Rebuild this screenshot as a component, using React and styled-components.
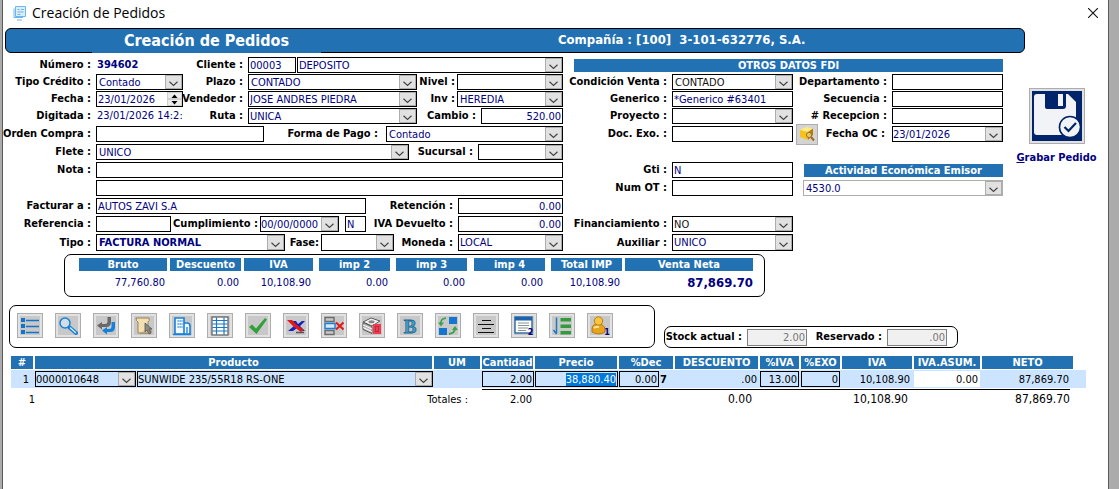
import React, { useEffect, useId, useRef } from "react";
import styled, { createGlobalStyle, css } from "styled-components";

const BLUE = "#2271b3";
const NAVY = "#000080";
const SELECTED = "#cce4ff";

const GlobalStyle = createGlobalStyle`
  * { box-sizing: border-box; }
  body {
    margin: 0;
    background: #ababab;
    font-family: "DejaVu Sans Condensed", "DejaVu Sans", "Noto Sans", sans-serif;
    font-size: 11px;
    color: #000;
  }
  input, select, button { font: inherit; margin: 0; }
`;

/* Grows and shrinks in proportion to its nominal width. */
const sized = css`
  flex: ${(p) => `${p.$w} ${p.$w} ${p.$w}px`};
  min-width: 0;
`;

const Window = styled.main`
  min-height: 100vh;
  margin: 0 10px 0 2px;
  padding-bottom: 24px;
  background: #fff;
  border: solid #5a5a5a;
  border-width: 0 1px;
`;

const TitleBar = styled.header`
  display: flex;
  align-items: center;
  height: 26px;
  padding: 0 9px 0 10px;
  font: 14px/26px "Open Sans", "Noto Sans", sans-serif;
`;

const WindowTitle = styled.span`
  flex: 1;
  margin-left: 6px;
`;

const CloseButton = styled.button`
  display: grid;
  place-items: center;
  width: 12px;
  height: 12px;
  padding: 0;
  border: 0;
  background: none;
`;

const Banner = styled.div`
  display: flex;
  height: 25px;
  margin: 2px 83px 4px 2px;
  background: ${BLUE};
  border: 1px solid #000;
  border-radius: 6px;
  color: #fff;
  font-weight: bold;
`;

const Heading = styled.h1`
  flex: 0 0 229px;
  margin: 0 0 -1px 86px;
  background: ${BLUE};
  font-size: 16px;
  line-height: 23px;
  text-align: center;
`;

const Company = styled.p`
  flex: 1;
  margin: 0 0 0 237px;
  font-size: 13px;
  line-height: 21px;
  white-space: pre;
`;

const Form = styled.form`
  display: flex;
`;

const Panel = styled.div`
  ${sized}
`;

const Rows = styled.div`
  display: flex;
  flex-direction: column;
  gap: ${(p) => p.$gap}px;
  margin-bottom: 2px;
`;

const Row = styled.div`
  display: flex;
  align-items: center;
  height: ${(p) => p.$h || 16}px;
`;

const Spacer = styled.span`
  ${sized}
`;

const Label = styled.label`
  ${sized}
  display: flex;
  justify-content: flex-end;
  padding-right: ${(p) => p.$pad ?? 5}px;
  font-weight: bold;
  line-height: 14px;
  white-space: nowrap;
`;

const StaticText = styled.output`
  ${sized}
  padding-left: 1px;
  color: ${NAVY};
  font-weight: ${(p) => (p.$bold ? "bold" : "normal")};
  line-height: 14px;
  white-space: nowrap;
`;

const Frame = styled.div`
  ${sized}
  display: grid;
  grid-template: minmax(0, 1fr) / minmax(0, 1fr);
  height: 100%;
  background: ${(p) => p.$bg || "#fff"};
  border: 1px solid ${(p) => p.$border || "#000"};
`;

const Input = styled.input`
  grid-area: 1 / 1;
  width: 100%;
  min-width: 0;
  height: 100%;
  padding: 0 1px;
  border: 0;
  outline: 0;
  background: transparent;
  color: ${(p) => p.$color || NAVY};
  text-align: ${(p) => (p.$right ? "right" : "left")};
  &::selection { background: #0078d7; color: #fff; }
`;

const Select = styled.select`
  grid-area: 1 / 1;
  width: 100%;
  min-width: 0;
  height: 100%;
  padding: 0 18px 0 ${(p) => p.$indent ?? 2}px;
  border: 0;
  outline: 0;
  appearance: none;
  background: transparent;
  color: ${(p) => p.$color || NAVY};
  font-weight: ${(p) => (p.$bold ? "bold" : "normal")};
`;

const Arrow = styled.span`
  grid-area: 1 / 1;
  justify-self: end;
  display: grid;
  place-items: end center;
  width: 17px;
  padding-bottom: 1px;
  background: #e1e1e1;
  border: 1px solid #adadad;
  pointer-events: none;
`;

const Spinner = styled.span`
  grid-area: 1 / 1;
  justify-self: end;
  display: grid;
  grid-template-rows: 1fr 1fr;
  width: 15px;
`;

const SpinButton = styled.button`
  display: grid;
  place-items: center;
  min-height: 0;
  padding: 0;
  border: 1px solid #d0d0d0;
  background: #ececec;
`;

const SectionTitle = styled.h2`
  flex: 1;
  height: 13px;
  margin: 0 0 0 ${(p) => p.$left}px;
  background: ${BLUE};
  color: #fff;
  font-size: 11px;
  line-height: 13px;
  text-align: center;
`;

const LookupButton = styled.button`
  flex: 0 0 22px;
  height: 21px;
  margin-left: 3px;
  padding: 0;
  display: grid;
  place-items: center;
  background: #d4d4d4;
  border: 1px solid #adadad;
`;

const SaveColumn = styled.div`
  ${sized}
  display: flex;
  justify-content: center;
  align-items: flex-start;
  padding: 31px 0 0 2px;
`;

const SaveButton = styled.button`
  display: grid;
  justify-items: center;
  gap: 7px;
  padding: 0;
  border: 0;
  background: none;
  color: ${NAVY};
  font-weight: bold;
  white-space: nowrap;
`;

const SaveIcon = styled.span`
  display: grid;
  place-items: center;
  width: 56px;
  height: 56px;
  background: #e1e1e1;
  border: 1px solid #adadad;
`;

const Box = styled.div`
  border: 1px solid #000;
  border-radius: 7px;
`;

const TotalsBox = styled(Box)`
  height: 43px;
  margin: 1px 343px 8px 61px;
  padding: 3px 11px 0 14px;
`;

const DataTable = styled.table`
  display: block;
  thead, tbody, tfoot { display: block; }
`;

const GridRow = styled.tr`
  display: grid;
  grid-template-columns: ${(p) => p.$cols.map((c) => `minmax(0, ${c}fr)`).join(" ")};
`;

const HeadCell = styled.th`
  height: 13px;
  margin-right: ${(p) => p.$gap}px;
  padding: 0;
  background: ${BLUE};
  color: #fff;
  font-size: 11px;
  line-height: 13px;
  text-align: center;
  white-space: nowrap;
`;

const TotalCell = styled.td`
  padding: 0 ${(p) => p.$pad}px 0 0;
  color: ${NAVY};
  font-size: ${(p) => (p.$strong ? 13 : 11)}px;
  font-weight: ${(p) => (p.$strong ? "bold" : "normal")};
  line-height: 24px;
  text-align: right;
`;

const ToolRow = styled.div`
  display: flex;
  align-items: flex-end;
  gap: 9px;
  padding: 0 150px 0 6px;
`;

const Toolbar = styled(Box)`
  ${sized}
  display: flex;
  align-items: center;
  gap: 12px;
  height: 43px;
  padding: 0 7px 2px;
`;

const ToolButton = styled.button`
  flex: 0 0 26px;
  display: grid;
  place-items: center;
  height: 25px;
  padding: 0;
  background: linear-gradient(#c8c8c8, #c8c8c8) center / 20px 19px no-repeat #e1e1e1;
  border: 1px solid #adadad;
`;

const StockBox = styled(Box)`
  ${sized}
  display: flex;
  align-items: center;
  height: 22px;
  padding: 0 10px 0 4px;
`;

const StockFrame = styled(Frame)`
  height: 17px;
`;

const ItemSection = styled.section`
  padding: 8px 22px 0 8px;
`;

const ItemRow = styled(GridRow)`
  height: 18px;
  margin-top: 1px;
  background: ${SELECTED};
`;

const ItemCell = styled.td`
  display: flex;
  justify-content: flex-end;
  align-items: center;
  gap: 1px;
  height: 18px;
  padding: 1px ${(p) => p.$pad ?? 1}px 1px 0;
`;

const FootRow = styled(GridRow)`
  margin-top: 1px;
`;

const FootCell = styled.td`
  grid-column: span ${(p) => p.$span || 1};
  height: 21px;
  margin-right: ${(p) => p.$inset || 0}px;
  padding: 0 ${(p) => p.$pad || 0}px 0 0;
  border-top: 1px solid ${(p) => (p.$line ? "#000" : "transparent")};
  font-size: ${(p) => (p.$large ? 12 : 11)}px;
  line-height: 19px;
  text-align: right;
  white-space: nowrap;
`;

function Chevron() {
  return (
    <svg width="9" height="6" viewBox="0 0 9 6" fill="none" stroke="#444" strokeWidth="1.2">
      <path d="M0.5 0.800 4.500 4.500 8.500 0.800" />
    </svg>
  );
}

function TextField({ label, labelW, pad, w, value = "", right, name }) {
  const id = useId();
  return (
    <>
      {label && <Label htmlFor={id} $w={labelW} $pad={pad}>{label}</Label>}
      <Frame $w={w}>
        <Input id={id} defaultValue={value} $right={right} aria-label={label ? undefined : name} />
      </Frame>
    </>
  );
}

function SelectField({ label, labelW, pad, w, value = "", color, bold, border, bg, indent, name }) {
  const id = useId();
  return (
    <>
      {label && <Label htmlFor={id} $w={labelW} $pad={pad}>{label}</Label>}
      <Frame $w={w} $border={border} $bg={bg}>
        <Select id={id} $color={color} $bold={bold} $indent={indent} aria-label={label ? undefined : name}>
          <option>{value}</option>
        </Select>
        <Arrow><Chevron /></Arrow>
      </Frame>
    </>
  );
}

function DateField({ label, labelW, w, value }) {
  const id = useId();
  return (
    <>
      <Label htmlFor={id} $w={labelW}>{label}</Label>
      <Frame $w={w}>
        <Input id={id} defaultValue={value} />
        <Spinner>
          <SpinButton type="button" aria-label="Subir">
            <svg width="7" height="4" viewBox="0 0 7 4"><path d="M0.5 4 3.5 0.5 6.5 4z" /></svg>
          </SpinButton>
          <SpinButton type="button" aria-label="Bajar">
            <svg width="7" height="4" viewBox="0 0 7 4"><path d="M0.5 0 3.5 3.5 6.5 0z" /></svg>
          </SpinButton>
        </Spinner>
      </Frame>
    </>
  );
}

function LeftPanel() {
  return (
    <Panel $w={560}>
      <Rows $gap={1}>
        <Row>
          <Label as="span" $w={93}>Número :</Label>
          <StaticText $w={86} $bold>394602</StaticText>
          <TextField label="Cliente :" labelW={66} w={48} value="00003" />
          <Spacer $w={1} />
          <SelectField name="Nombre del cliente" w={266} value="DEPOSITO" indent={1} />
        </Row>
        <Row>
          <SelectField label="Tipo Crédito :" labelW={93} w={87} value="Contado" />
          <SelectField label="Plazo :" labelW={65} w={169} value="CONTADO" />
          <SelectField label="Nivel :" labelW={40} pad={2} w={106} />
        </Row>
        <Row>
          <DateField label="Fecha :" labelW={93} w={87} value="23/01/2026" />
          <SelectField label="Vendedor :" labelW={65} w={169} value="JOSE ANDRES PIEDRA" indent={1} />
          <SelectField label="Inv :" labelW={40} pad={2} w={106} value="HEREDIA" />
        </Row>
        <Row>
          <Label as="span" $w={93}>Digitada :</Label>
          <StaticText $w={87}>23/01/2026 14:2:</StaticText>
          <SelectField label="Ruta :" labelW={65} w={169} value="UNICA" indent={1} />
          <TextField label="Cambio :" labelW={64} w={82} value="520.00" right />
        </Row>
      </Rows>
      <Rows $gap={2}>
        <Row>
          <TextField label="Orden Compra :" labelW={93} w={168} />
          <SelectField label="Forma de Pago :" labelW={122} pad={8} w={177} value="Contado" />
        </Row>
        <Row>
          <SelectField label="Flete :" labelW={93} w={313} value="UNICO" />
          <SelectField label="Sucursal :" labelW={69} w={85} />
        </Row>
        <Row><TextField label="Nota :" labelW={93} w={467} /></Row>
        <Row>
          <Spacer $w={93} />
          <TextField name="Nota, segunda línea" w={467} />
        </Row>
        <Row>
          <TextField label="Facturar a :" labelW={93} w={270} value="AUTOS ZAVI S.A" />
          <TextField label="Retención :" labelW={92} w={105} value="0.00" right />
        </Row>
        <Row>
          <TextField label="Referencia :" labelW={93} w={75} />
          <SelectField label="Cumplimiento :" labelW={89} pad={2} w={79} value="00/00/0000" indent={0} />
          <Spacer $w={6} />
          <TextField name="Cumplido" w={21} value="N" />
          <TextField label="IVA Devuelto :" labelW={92} w={105} value="0.00" right />
        </Row>
        <Row $h={17}>
          <SelectField label="Tipo :" labelW={93} w={189} value="FACTURA NORMAL" bold />
          <SelectField label="Fase:" labelW={36} pad={2} w={73} />
          <SelectField label="Moneda :" labelW={64} w={105} value="LOCAL" indent={1} />
        </Row>
      </Rows>
    </Panel>
  );
}

function RightPanel() {
  return (
    <Panel $w={440}>
      <Rows $gap={1}>
        <Row><SectionTitle $left={11}>OTROS DATOS FDI</SectionTitle></Row>
        <Row>
          <SelectField label="Condición Venta :" labelW={109} w={121} value="CONTADO" color="#111" />
          <TextField label="Departamento :" labelW={99} w={111} />
        </Row>
        <Row>
          <TextField label="Generico :" labelW={109} w={121} value="*Generico #63401" />
          <TextField label="Secuencia :" labelW={99} w={111} />
        </Row>
        <Row>
          <SelectField label="Proyecto :" labelW={109} w={121} />
          <TextField label="# Recepcion :" labelW={99} w={111} />
        </Row>
      </Rows>
      <Rows $gap={2}>
        <Row>
          <TextField label="Doc. Exo. :" labelW={109} w={121} />
          <LookupButton type="button" aria-label="Buscar documento">
            <svg width="18" height="18" viewBox="0 0 18 18">
              <path d="M2 5 8 2l7 1.500-5 3.500z" fill="#ffec80" />
              <path d="M2 5l8 2v8l-8-3z" fill="#f7c21e" />
              <path d="M10 7l5-3.500V10l-5 5z" fill="#b9790e" />
              <circle cx="11" cy="10" r="2.600" fill="#e9c765" stroke="#9b7428" />
              <path d="M13 12l3 3.500" stroke="#a8641a" strokeWidth="2" />
            </svg>
          </LookupButton>
          <SelectField label="Fecha OC :" labelW={74} pad={7} w={111} value="23/01/2026" indent={0} />
        </Row>
        <Row />
        <Row>
          <TextField label="Gti :" labelW={109} w={121} value="N" />
          <Panel $w={210}>
            <Row $h={14}><SectionTitle $left={11}>Actividad Económica Emisor</SectionTitle></Row>
          </Panel>
        </Row>
        <Row>
          <TextField label="Num OT :" labelW={109} w={121} />
          <Spacer $w={10} />
          <SelectField name="Actividad Económica Emisor" w={200} value="4530.0" border="#adadad" />
        </Row>
        <Row />
        <Row>
          <SelectField label="Financiamiento :" labelW={109} w={121} value="NO" color="#111" indent={1} />
          <Spacer $w={210} />
        </Row>
        <Row $h={17}>
          <SelectField label="Auxiliar :" labelW={109} w={121} value="UNICO" indent={1} />
          <Spacer $w={210} />
        </Row>
      </Rows>
    </Panel>
  );
}

function DiskIcon() {
  return (
    <svg width="50" height="50" viewBox="0 0 50 50">
      <rect width="50" height="50" fill="#00246b" />
      <path d="M5 3h8v13q0 2 2 2h16q3 0 3-3V3h2l8 8v18a10 10 0 0 0-14 15H5q-3 0-3-3V6q0-3 3-3z" fill="#f1f3f6" />
      <rect x="26" y="3" width="5" height="12" fill="#f1f3f6" />
      <circle cx="38" cy="36" r="10.500" fill="#f1f3f6" stroke="#00246b" strokeWidth="1.500" />
      <path d="M32.500 36l4 4 7.500-8" fill="none" stroke="#00246b" strokeWidth="2.200" />
    </svg>
  );
}

const TOOLS = [
  ["Lista", <>
    <path d="M1 2h4v4H1zM1 8h4v4H1zM1 14h4v4H1z" fill="#1173c9" />
    <path d="M6 4.500h13M6 10.500h13M6 16.500h13" stroke="#1173c9" strokeWidth="1.300" />
  </>],
  ["Buscar", <>
    <path d="M11 11l7 6" stroke="#1a80d4" strokeWidth="4" strokeLinecap="round" />
    <path d="M12.500 12l5 4.500" stroke="#d4e4f2" strokeWidth="1.500" strokeLinecap="round" />
    <circle cx="7" cy="7" r="5" fill="#d2dde6" stroke="#1a80d4" strokeWidth="1.500" />
  </>],
  ["Devolver", <>
    <path d="M11.500 1h3.500v5q0 5-5 5H6v2.500L1 9.500 6 6v2h3q2.500 0 2.500-2z" fill="#686868" />
    <path d="M15.500 6H19v5q0 5-5 5h-3v2.500L6 14.500 11 11v2h2q2.500 0 2.500-2z" fill="#1681da" />
  </>],
  ["Documento", <>
    <path d="M2 2h13q1 3-1 4v11H4V6Q2 5 2 2z" fill="#f2dfb2" stroke="#9a835a" />
    <path d="M6 17h11v-3h-6" fill="#dfc591" stroke="#9a835a" />
    <path d="M11 7v9l2-2 2 4 2-1-2-4h3z" fill="#8b8b86" stroke="#555" strokeWidth=".8" />
  </>],
  ["Empresa", <>
    <path d="M3 18V2h9v16zM12 7h3q3 0 3 3v8h-6" fill="#f5f9fc" stroke="#1681da" strokeWidth="1.600" />
    <path d="M5.500 5h5M5.500 8h5M5.500 11h5" stroke="#1681da" strokeWidth="1.400" strokeDasharray="1.200 .8" />
    <path d="M1 18.500h18M15 11v6" stroke="#1681da" strokeWidth="1.300" />
  </>],
  ["Tabla", <>
    <rect x="2" y="1" width="16" height="18" fill="#fff" stroke="#666" strokeWidth="1.300" />
    <path d="M2.500 4.500h15M2.500 8h15M2.500 11.500h15M2.500 15h15M6.500 1.500v17M14 1.500v17" stroke="#1b78c4" strokeWidth="1.200" />
  </>],
  ["Aceptar", <path d="M1 11l3-2.500 4 4L17 2l2 1.500L8.500 18z" fill="#32a03a" />],
  ["Anular", <>
    <path d="M2 15 8 10 6 5h4l2 3 4-3h3l-5 5 5 5h-5l-3-3-4 3z" fill="#1220c0" />
    <path d="M1 4h5l5 5 7 5-3 2-7-5z" fill="#e31818" />
    <path d="M10 16.500h8" stroke="#555" strokeWidth="1.500" />
  </>],
  ["Eliminar línea", <>
    <path d="M1 1.500h9v4H1zM1 14.500h9v4H1z" fill="none" stroke="#6c6c6c" strokeWidth="1.400" />
    <path d="M1 7.500h10v5H1z" fill="#d8e8f5" stroke="#1681da" strokeWidth="1.400" />
    <path d="M12 6.500l7.500 7M19.500 6.500l-7.500 7" stroke="#e21b1b" strokeWidth="2" />
  </>],
  ["Efectivo", <>
    <path d="M1 6 9 2l9 3-8 5z" fill="#f2f2f2" stroke="#5c5c5c" />
    <ellipse cx="9.500" cy="5.800" rx="3" ry="1.500" fill="#888" />
    <path d="M1 6.500v7l9 4v-7z" fill="#b5b5b5" stroke="#5c5c5c" />
    <path d="M1 9l9 4M1 11.500l9 4" stroke="#fff" />
    <rect x="11" y="8" width="8" height="10" fill="#ee3d50" />
    <rect x="13.500" y="10.500" width="3" height="5" fill="none" stroke="#c22a3c" />
  </>],
  ["Negrita", <text x="10" y="16.500" textAnchor="middle" fontFamily="Liberation Serif, serif" fontSize="19" fontWeight="bold" fill="#4a9ac6" stroke="#216c98" strokeWidth=".8">B</text>],
  ["Intercambiar", <>
    <path d="M11 1h8v7h-8zM1 12h8v7H1z" fill="#1476d0" />
    <path d="M3 8Q2 3 8 2" fill="none" stroke="#38a34a" strokeWidth="1.600" />
    <path d="M0 6.500h6L3 10.500zM14 14l3-4 3 4z" fill="#38a34a" />
    <path d="M17 12q0 5-6 6" fill="none" stroke="#38a34a" strokeWidth="1.800" />
  </>],
  ["Centrar", <path d="M6 4.500h9M2 8.500h16M6 12.500h9M2 16.500h16" stroke="#111" strokeWidth="1.200" />],
  ["Ventana", <>
    <rect x="1" y="1" width="17" height="16" fill="#fffef0" stroke="#2b6aa6" strokeWidth="1.400" />
    <path d="M1 1h17v3.500H1z" fill="#1c62ae" />
    <path d="M4 7h11M4 9.500h11M4 12h10M4 14.500h8" stroke="#8295a8" />
    <text x="16.500" y="19" textAnchor="middle" fontFamily="DejaVu Sans, sans-serif" fontSize="8" fontWeight="bold" fill={NAVY}>2</text>
  </>],
  ["Ordenar", <>
    <path d="M8.500 2H19v3.500H8.500zM8.500 8.500H19V12H8.500zM8.500 15H19v3.500H8.500z" fill="#339b3d" />
    <path d="M4.500 1.500v16M1.500 14l3 4" fill="none" stroke="#1b78c4" strokeWidth="1.500" />
  </>],
  ["Usuario", <>
    <path d="M2 13q0-5 6-5t7 5v3q-6 4-13 0z" fill="#e8a31c" stroke="#a86a08" strokeWidth=".8" />
    <circle cx="8.500" cy="5" r="4.200" fill="#f8c53c" stroke="#a86a08" strokeWidth=".8" />
    <path d="M4 12q2-2 5-1" stroke="#ffe697" strokeWidth="2" fill="none" />
    <text x="17" y="19" textAnchor="middle" fontFamily="DejaVu Sans, sans-serif" fontSize="8" fontWeight="bold" fill={NAVY}>1</text>
  </>],
];

const TOTAL_COLS = [91, 74, 75, 77, 78, 77, 74, 128];
const TOTALS = [
  ["Bruto", "77,760.80", 3],
  ["Descuento", "0.00", 3],
  ["IVA", "10,108.90", 6],
  ["imp 2", "0.00", 6],
  ["imp 3", "0.00", 7],
  ["imp 4", "0.00", 6],
  ["Total IMP", "10,108.90", 3],
  ["Venta Neta", "87,869.70", 0],
];

function Totals() {
  return (
    <TotalsBox>
      <DataTable>
        <thead>
          <GridRow $cols={TOTAL_COLS}>
            {TOTALS.map(([name, , gap]) => <HeadCell key={name} scope="col" $gap={gap}>{name}</HeadCell>)}
          </GridRow>
        </thead>
        <tbody>
          <GridRow $cols={TOTAL_COLS}>
            {TOTALS.map(([name, value, gap], i) => (
              <TotalCell key={name} $strong={i === 7} $pad={i === 7 ? 0 : gap + 2}>{value}</TotalCell>
            ))}
          </GridRow>
        </tbody>
      </DataTable>
    </TotalsBox>
  );
}

const ITEM_COLS = [24, 399, 48, 53, 84, 56, 85, 41, 41, 72, 68, 104];
const ITEM_HEADS = ["#", "Producto", "UM", "Cantidad", "Precio", "%Dec", "DESCUENTO", "%IVA", "%EXO", "IVA", "IVA.ASUM.", "NETO"];

function ItemInput({ name, value, border = "#000", bg = SELECTED, inputRef }) {
  return (
    <Frame $w={1} $border={border} $bg={bg}>
      <Input ref={inputRef} aria-label={name} defaultValue={value} $right $color="#000" />
    </Frame>
  );
}

function Items() {
  const price = useRef(null);
  useEffect(() => {
    price.current.focus();
    price.current.select();
  }, []);
  return (
    <ItemSection>
      <DataTable>
        <thead>
          <GridRow $cols={ITEM_COLS}>
            {ITEM_HEADS.map((h) => <HeadCell key={h} scope="col" $gap={h === "NETO" ? 13 : 2}>{h}</HeadCell>)}
          </GridRow>
        </thead>
        <tbody>
          <ItemRow $cols={ITEM_COLS}>
            <ItemCell $pad={6}>1</ItemCell>
            <ItemCell>
              <SelectField name="Código" w={101} value="0000010648" color="#000" bg={SELECTED} indent={0} />
              <SelectField name="Producto" w={296} value="SUNWIDE 235/55R18 RS-ONE" color="#000" bg={SELECTED} indent={0} />
            </ItemCell>
            <ItemCell />
            <ItemCell><ItemInput name="Cantidad" value="2.00" /></ItemCell>
            <ItemCell><ItemInput name="Precio" value="38,880.40" inputRef={price} /></ItemCell>
            <ItemCell $pad={8}><ItemInput name="Descuento %" value="0.00" /><b>7</b></ItemCell>
            <ItemCell $pad={3}>.00</ItemCell>
            <ItemCell $pad={2}><ItemInput name="IVA %" value="13.00" /></ItemCell>
            <ItemCell $pad={2}><ItemInput name="Exoneración %" value="0" /></ItemCell>
            <ItemCell $pad={4}>10,108.90</ItemCell>
            <ItemCell $pad={2}><ItemInput name="IVA asumido" value="0.00" border="#fff" bg="#fff" /></ItemCell>
            <ItemCell $pad={17}>87,869.70</ItemCell>
          </ItemRow>
        </tbody>
        <tfoot>
          <FootRow $cols={ITEM_COLS}>
            <FootCell>1</FootCell>
            <FootCell $span={2} $pad={14}>Totales :</FootCell>
            <FootCell $line $pad={3}>2.00</FootCell>
            <FootCell $line />
            <FootCell $line />
            <FootCell $line $large $pad={8}>0.00</FootCell>
            <FootCell $line />
            <FootCell $line />
            <FootCell $line $large $pad={6}>10,108.90</FootCell>
            <FootCell $line />
            <FootCell $line $large $inset={16}>87,869.70</FootCell>
          </FootRow>
        </tfoot>
      </DataTable>
    </ItemSection>
  );
}

export default function App() {
  return (
    <>
      <GlobalStyle />
      <Window>
        <TitleBar>
          <svg width="13" height="15" viewBox="0 0 13 15" fill="none" stroke="#6fb4ea">
            <path d="M1 2.500v9h9" />
            <path d="M2.500.5h10v10h-10z" fill="#d9edfb" />
            <path d="M4.500 3.500h2M8 3.500h3M4.500 6h6M4.500 8.500h3M4 14h5" />
          </svg>
          <WindowTitle>Creación de Pedidos</WindowTitle>
          <CloseButton aria-label="Cerrar">
            <svg width="10" height="10" viewBox="0 0 10 10" stroke="#111" strokeWidth="1.100">
              <path d="M0 0l10 10M10 0L0 10" />
            </svg>
          </CloseButton>
        </TitleBar>
        <Banner>
          <Heading>Creación de Pedidos</Heading>
          <Company>Compañía : [100]  3-101-632776, S.A.</Company>
        </Banner>
        <Form>
          <LeftPanel />
          <RightPanel />
          <SaveColumn $w={105}>
            <SaveButton type="button">
              <SaveIcon><DiskIcon /></SaveIcon>
              <span><u>G</u>rabar Pedido</span>
            </SaveButton>
          </SaveColumn>
        </Form>
        <Totals />
        <ToolRow>
          <Toolbar $w={646} role="toolbar">
            {TOOLS.map(([name, drawing]) => (
              <ToolButton key={name} type="button" aria-label={name}>
                <svg width="20" height="20" viewBox="0 0 20 20">{drawing}</svg>
              </ToolButton>
            ))}
          </Toolbar>
          <StockBox $w={294}>
            <Label htmlFor="stock" $w={78}>Stock actual :</Label>
            <StockFrame $w={60} $border="#808080" $bg="#f0f0f0">
              <Input id="stock" defaultValue="2.00" readOnly $right $color="#777" />
            </StockFrame>
            <Label htmlFor="reservado" $w={80}>Reservado :</Label>
            <StockFrame $w={60} $border="#808080" $bg="#f0f0f0">
              <Input id="reservado" defaultValue=".00" readOnly $right $color="#777" />
            </StockFrame>
          </StockBox>
        </ToolRow>
        <Items />
      </Window>
    </>
  );
}
